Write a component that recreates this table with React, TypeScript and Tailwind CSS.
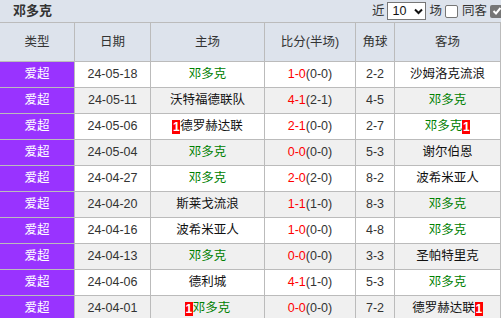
import React from "react";

type Team = { name: string; home?: boolean; card?: "before" | "after" };

interface Match {
  date: string;
  home: Team;
  score: string;
  half: string;
  corner: string;
  away: Team;
}

const matches: Match[] = [
  { date: "24-05-18", home: { name: "邓多克", home: true }, score: "1-0", half: "(0-0)", corner: "2-2", away: { name: "沙姆洛克流浪" } },
  { date: "24-05-11", home: { name: "沃特福德联队" }, score: "4-1", half: "(2-1)", corner: "4-5", away: { name: "邓多克", home: true } },
  { date: "24-05-06", home: { name: "德罗赫达联", card: "before" }, score: "2-1", half: "(0-0)", corner: "2-7", away: { name: "邓多克", home: true, card: "after" } },
  { date: "24-05-04", home: { name: "邓多克", home: true }, score: "0-0", half: "(0-0)", corner: "5-3", away: { name: "谢尔伯恩" } },
  { date: "24-04-27", home: { name: "邓多克", home: true }, score: "2-0", half: "(2-0)", corner: "8-2", away: { name: "波希米亚人" } },
  { date: "24-04-20", home: { name: "斯莱戈流浪" }, score: "1-1", half: "(1-0)", corner: "8-3", away: { name: "邓多克", home: true } },
  { date: "24-04-16", home: { name: "波希米亚人" }, score: "1-0", half: "(0-0)", corner: "4-8", away: { name: "邓多克", home: true } },
  { date: "24-04-13", home: { name: "邓多克", home: true }, score: "0-0", half: "(0-0)", corner: "3-3", away: { name: "圣帕特里克" } },
  { date: "24-04-06", home: { name: "德利城" }, score: "4-1", half: "(1-0)", corner: "5-3", away: { name: "邓多克", home: true } },
  { date: "24-04-01", home: { name: "邓多克", home: true, card: "before" }, score: "0-0", half: "(0-0)", corner: "7-2", away: { name: "德罗赫达联", card: "after" } },
];

const cols = "grid grid-cols-[75px_76px_114px_91px_39px_106px]";
const cell = "flex items-center justify-center border-r border-b border-[#bbbbbb]";

const Card = () => (
  <span className="inline-flex h-[14px] w-[8px] items-center justify-center bg-[#ff0000] text-[12px] font-bold leading-none text-white">
    1
  </span>
);

const TeamCell = ({ team }: { team: Team }) => (
  <span className={`flex items-center ${team.home ? "text-[#008000]" : "text-[#111111]"}`}>
    {team.card === "before" && <Card />}
    {team.name}
    {team.card === "after" && <Card />}
  </span>
);

export default function App() {
  return (
    <div
      className="w-[501px] overflow-hidden bg-white text-[12.5px] text-[#333333]"
      style={{ fontFamily: '"Liberation Sans", "Noto Sans CJK SC", sans-serif' }}
    >
      {/* Title bar */}
      <div className="flex h-[23px] items-center justify-between overflow-hidden border-b border-[#bbbbbb] bg-[#dde3ec]">
        <span className="pl-[13px] text-[13px] font-bold text-[#333333]">邓多克</span>
        <div className="-mr-[2px] flex shrink-0 items-center text-[12.5px] text-[#333333]">
          <span>近</span>
          <div className="ml-[3px] mr-[3px] flex h-[18px] w-[39px] items-center justify-between border border-[#767676] bg-white pl-[4px] pr-[2px]">
            <span className="text-[12.5px] text-[#111111]">10</span>
            <svg width="9" height="7" viewBox="0 0 9 7">
              <path d="M1 1.5 L4.5 5 L8 1.5" stroke="#111" strokeWidth="2" fill="none" />
            </svg>
          </div>
          <span>场</span>
          <span className="ml-[3px] mr-[4px] h-[13px] w-[13px] rounded-[2px] border border-[#767676] bg-white" />
          <span>同客</span>
          <span className="ml-[3px] flex h-[13px] w-[13px] items-center justify-center rounded-[2px] bg-[#767676]">
            <svg width="10" height="10" viewBox="0 0 10 10">
              <path d="M1.5 5 L4 7.5 L8.5 2" stroke="#fff" strokeWidth="2" fill="none" />
            </svg>
          </span>
        </div>
      </div>

      {/* Header */}
      <div className={`${cols} h-[39px] bg-[#dde3ec]`}>
        {["类型", "日期", "主场", "比分(半场)", "角球", "客场"].map((h) => (
          <div key={h} className={cell}>
            {h}
          </div>
        ))}
      </div>

      {/* Rows */}
      {matches.map((m, i) => (
        <div key={m.date} className={`${cols} h-[26px] ${i % 2 ? "bg-[#f0f0f0]" : "bg-white"}`}>
          <div className={`${cell} bg-[#9933ff] text-white`}>爱超</div>
          <div className={cell}>{m.date}</div>
          <div className={cell}>
            <TeamCell team={m.home} />
          </div>
          <div className={cell}>
            <span className="text-[#ff0000]">{m.score}</span>
            <span>{m.half}</span>
          </div>
          <div className={cell}>{m.corner}</div>
          <div className={cell}>
            <TeamCell team={m.away} />
          </div>
        </div>
      ))}
    </div>
  );
}
